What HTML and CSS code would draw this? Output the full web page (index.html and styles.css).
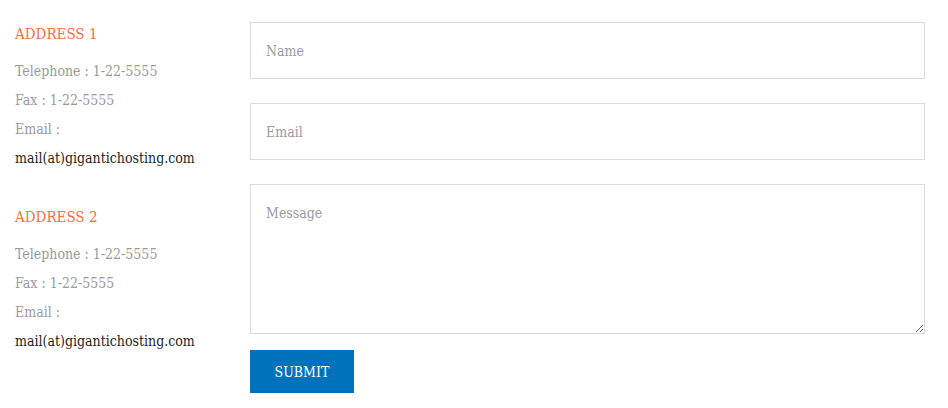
FILE: index.html
```html
<!DOCTYPE html>
<html>
<head>
<meta charset="utf-8">
<link rel="stylesheet" href="styles.css">
</head>
<body>
<div class="contact">
  <div class="addresses">
    <div class="address">
      <h3 class="address-title">ADDRESS 1</h3>
      <p class="line muted">Telephone : 1-22-5555</p>
      <p class="line muted">Fax : 1-22-5555</p>
      <p class="line muted">Email :</p>
      <p class="line dark">mail(at)gigantichosting.com</p>
    </div>
    <div class="address">
      <h3 class="address-title">ADDRESS 2</h3>
      <p class="line muted">Telephone : 1-22-5555</p>
      <p class="line muted">Fax : 1-22-5555</p>
      <p class="line muted">Email :</p>
      <p class="line dark">mail(at)gigantichosting.com</p>
    </div>
  </div>
  <form class="form">
    <input class="field" type="text" placeholder="Name">
    <input class="field" type="text" placeholder="Email">
    <textarea class="field area" placeholder="Message"></textarea>
    <button class="submit" type="button">SUBMIT</button>
  </form>
</div>
</body>
</html>
```
FILE: styles.css
```css
html, body {
  margin: 0;
  padding: 0;
  background: #fff;
}
body {
  font-family: "DejaVu Serif", serif;
  font-stretch: condensed;
}
.contact {
  display: flex;
  padding: 22px 23px 0 15px;
}
.addresses {
  width: 235px;
  flex: none;
  display: flex;
  flex-direction: column;
  gap: 32px;
}
.address-title {
  margin: 0 0 11px;
  font-size: 15px;
  line-height: 24px;
  font-weight: normal;
  color: #f2703f;
}
.line {
  margin: 0;
  font-size: 14px;
  line-height: 29px;
}
.muted { color: #9a9a9a; }
.dark { color: #1e1e1e; }
.form {
  flex: 1;
  display: flex;
  flex-direction: column;
  align-items: flex-start;
}
.field {
  box-sizing: border-box;
  width: 100%;
  height: 57px;
  margin: 0 0 24px;
  padding: 0 15px;
  border: 1px solid #dcdcdc;
  border-radius: 0;
  font-family: "DejaVu Serif", serif;
  font-stretch: condensed;
  font-size: 14px;
  color: #333;
  outline: none;
  background: #fff;
}
.field::placeholder {
  color: #9a9aa4;
}
.area {
  height: 150px;
  padding: 20px 15px;
  margin-bottom: 16px;
  resize: vertical;
}
.submit {
  width: 104px;
  height: 43px;
  border: 0;
  background: #0072bc;
  color: #fff;
  font-family: "DejaVu Serif", serif;
  font-stretch: condensed;
  font-size: 14px;
  padding: 0;
  cursor: pointer;
}
```
